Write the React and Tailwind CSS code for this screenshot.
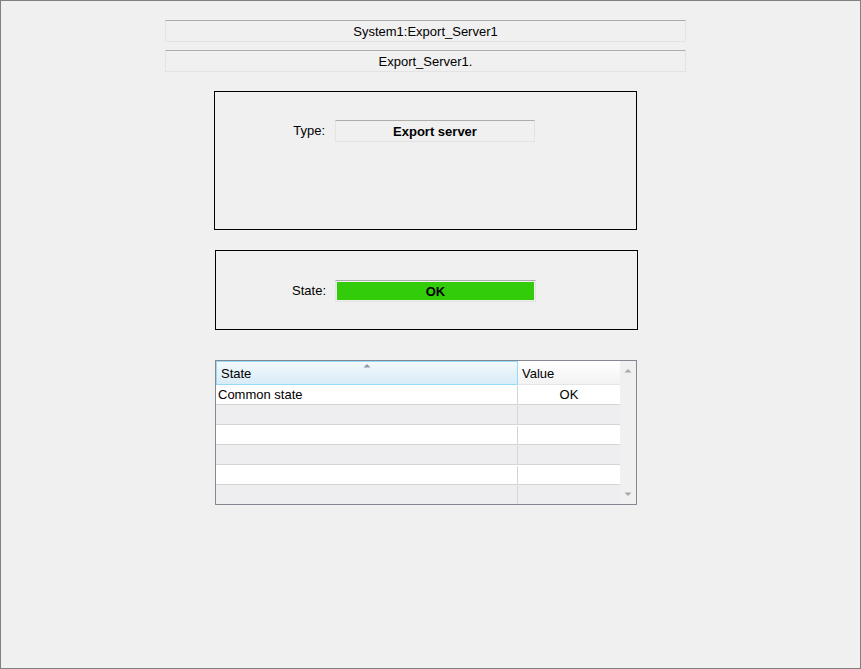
const rows = [
  { state: 'Common state', value: 'OK' },
  { state: '', value: '' },
  { state: '', value: '' },
  { state: '', value: '' },
  { state: '', value: '' },
  { state: '', value: '' },
];

const Field = ({ children, className = '' }) => (
  <div
    className={`flex items-center justify-center border border-[#e3e3e3] border-t-[#acacac] bg-[#f0f0f0] ${className}`}
  >
    {children}
  </div>
);

const App = () => {
  return (
    <div
      className="w-[861px] h-[669px] bg-[#f0f0f0] border border-[#808080] flex flex-col text-[13px] text-black"
      style={{ fontFamily: '"Liberation Sans", Arial, sans-serif' }}
    >
      <Field className="ml-[164px] mt-[19px] w-[521px] h-[22px] pt-px">System1:Export_Server1</Field>
      <Field className="ml-[164px] mt-[8px] w-[521px] h-[22px] pt-px">Export_Server1.</Field>

      <div className="ml-[213px] mt-[19px] w-[423px] h-[139px] border border-black pt-[28px]">
        <div className="flex items-center">
          <div className="w-[110px] text-right">Type:</div>
          <Field className="ml-[10px] w-[200px] h-[22px] font-bold pt-px">Export server</Field>
        </div>
      </div>

      <div className="ml-[214px] mt-[20px] w-[423px] h-[80px] border border-black pt-[29px]">
        <div className="flex items-center">
          <div className="w-[110px] text-right">State:</div>
          <div className="ml-[9px] w-[201px] h-[22px] border border-[#e3e3e3] border-t-[#acacac] p-px">
            <div className="h-full bg-[#33cc0a] flex items-center justify-center font-bold pt-px">OK</div>
          </div>
        </div>
      </div>

      <div className="ml-[214px] mt-[30px] w-[422px] h-[145px] border border-[#828790] flex bg-white overflow-hidden">
        <div className="w-[404px] flex flex-col">
          <div className="flex h-[24px] shrink-0">
            <div className="relative w-[302px] h-full border border-[#96d9f9] bg-gradient-to-b from-[#f3f9fc] to-[#d8ecf7] flex items-end pb-px pl-[4px]">
              <svg className="absolute left-[146px] top-[1px]" width="8" height="5" viewBox="0 0 8 5">
                <path d="M0.5 4.5 L4 1 L7.5 4.5 Z" fill="#8a9bb0" />
              </svg>
              State
            </div>
            <div className="w-[102px] h-full border-b border-[#e5e5e5] bg-gradient-to-b from-white to-[#f3f3f3] flex items-end pb-px pl-[4px]">
              Value
            </div>
          </div>
          {rows.map((r, i) => (
            <div
              key={i}
              className={`flex h-[20px] shrink-0 pt-px ${i < rows.length - 1 ? 'border-b border-[#d5d5d5]' : ''} ${i % 2 === 1 ? 'bg-[#eeeef0]' : 'bg-white'}`}
            >
              <div className="w-[302px] border-r border-[#d5d5d5] pl-[2px] flex items-center">{r.state}</div>
              <div className="w-[102px] flex items-center justify-center">{r.value}</div>
            </div>
          ))}
        </div>
        <div className="w-[16px] bg-[#f0f0f0] flex flex-col justify-between items-center py-[7px]">
          <svg width="8" height="5" viewBox="0 0 8 5">
            <path d="M0.5 4.5 L4 1 L7.5 4.5 Z" fill="#a8a8a8" />
          </svg>
          <svg width="8" height="5" viewBox="0 0 8 5">
            <path d="M0.5 0.5 L4 4 L7.5 0.5 Z" fill="#a8a8a8" />
          </svg>
        </div>
      </div>
    </div>
  );
};

export default App;
